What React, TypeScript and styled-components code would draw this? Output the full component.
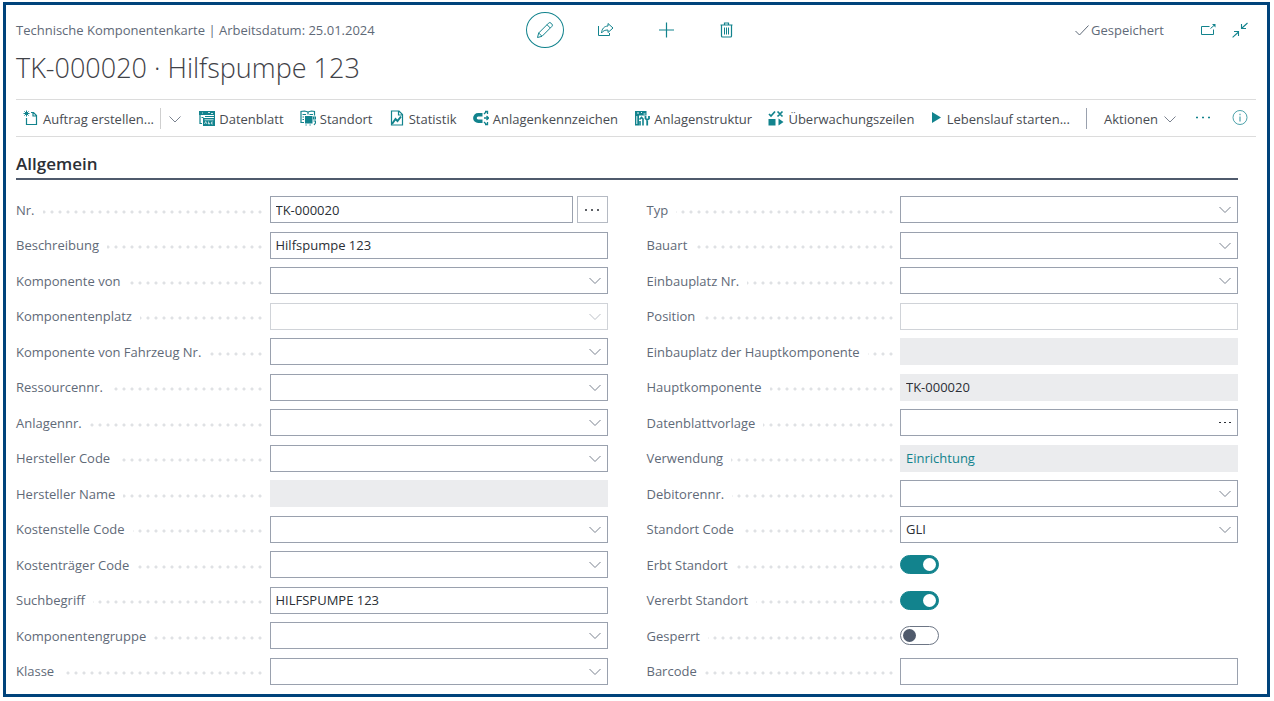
import React, { useId, useState } from "react";
import styled, { createGlobalStyle, css } from "styled-components";

const teal = "#12838d";
const slate = "#5f6a78";
const ink = "#2b2f36";
const line = "#9aa1ae";

const GlobalStyle = createGlobalStyle`
  *, *::before, *::after { box-sizing: border-box; }
  body {
    margin: 0;
    background: #fff;
    color: ${ink};
    font-family: "Open Sans", "Segoe UI", "Noto Sans", sans-serif;
    font-size: 13px;
    line-height: 18px;
  }
  button, input, select { font: inherit; color: inherit; margin: 0; }
`;

const Frame = styled.div`
  display: flex;
  flex-direction: column;
  min-height: calc(100vh - 6px);
  margin: 2px 4px 4px 3px;
  padding: 7px 11px 5px 10px;
  border: 3px solid #00437b;
`;

const Header = styled.header`
  display: grid;
  grid-template-columns: 1fr auto 1fr;
  align-items: center;
  color: ${slate};
`;

const Actions = styled.div`
  display: flex;
  gap: 23px;
`;

const RoundButton = styled.button<{ $active?: boolean }>`
  display: grid;
  place-items: center;
  width: 38px;
  height: 36px;
  padding: 0;
  background: none;
  border: 1px solid ${(p) => (p.$active ? teal : "transparent")};
  border-radius: 50%;
  color: ${teal};
`;

const Status = styled.div`
  display: flex;
  align-items: center;
  justify-content: flex-end;
`;

const Saved = styled.span`
  display: flex;
  align-items: center;
  gap: 1px;
  margin-right: 36px;
`;

const PlainButton = styled.button`
  display: flex;
  align-items: center;
  gap: 4px;
  padding: 0;
  background: none;
  border: 0;
  white-space: nowrap;
`;

const WindowButtons = styled.div`
  display: flex;
  gap: 16px;
  margin-right: 8px;
  color: ${teal};
`;

const Title = styled.h1`
  margin: 0;
  padding: 2px 0 13px;
  color: #3f4248;
  font-size: 27px;
  line-height: 36px;
  font-weight: 300;
`;

const Toolbar = styled.div`
  display: flex;
  align-items: center;
  height: 38px;
  padding: 0 8px 0 7px;
  border-top: 1px solid #dcdcdc;
  border-bottom: 1px solid #dcdcdc;
  color: #484c52;
`;

const ToolGroup = styled.div`
  display: flex;
  flex: 1;
  align-items: center;
  justify-content: space-between;
`;

const SplitTool = styled.div`
  display: flex;
  align-items: center;
  gap: 6px;
`;

const Divider = styled.span<{ $dark?: boolean }>`
  width: 1px;
  height: 21px;
  background: ${(p) => (p.$dark ? line : "#cfcfcf")};
`;

const MenuGroup = styled.div`
  display: flex;
  align-items: center;
  gap: 17px;
  margin-left: 16px;
`;

const ToolText = styled.span`
  padding-top: 1px;
`;

const Section = styled.section`
  display: flex;
  flex: 1;
  flex-direction: column;
  padding-right: 18px;
`;

const SectionTitle = styled.h2`
  margin: 0 0 12px;
  padding: 16px 0 3px;
  border-bottom: 2px solid #4f5a6c;
  font-size: 17px;
  line-height: 22px;
  font-weight: 600;
`;

const Columns = styled.div`
  display: grid;
  flex: 1;
  grid-template-columns: 1fr 1fr;
  column-gap: 39px;
`;

const Column = styled.div`
  display: grid;
  grid-auto-rows: 1fr;
`;

const Row = styled.div`
  display: grid;
  grid-template-columns: 3fr 4fr;
  align-items: center;
  min-height: 35px;
`;

const Label = styled.label`
  display: block;
  margin-right: 5px;
  color: ${slate};
  white-space: nowrap;
  background: radial-gradient(circle at 4px 11px, #dfe1e4 1px, transparent 2px) 0 0 / 8px 18px;
`;

const LabelText = styled.span`
  display: inline-block;
  padding-right: 8px;
  background: #fff;
`;

const Control = styled.div`
  position: relative;
  display: flex;
  gap: 4px;
`;

const fieldStyle = css<{ $muted?: boolean }>`
  flex: 1;
  min-width: 0;
  width: 100%;
  height: 27px;
  padding: 0 5px;
  background: #fff;
  border: 1px solid ${(p) => (p.$muted ? "#d0d3d8" : line)};
  border-radius: 0;
  opacity: 1;
`;

const TextInput = styled.input`
  ${fieldStyle}
  &:read-only:not(:disabled) {
    background: #ebecee;
    border-color: #ebecee;
  }
`;

const Select = styled.select`
  ${fieldStyle}
  appearance: none;
`;

const Overlay = styled.span<{ $muted?: boolean }>`
  position: absolute;
  top: 6px;
  right: 5px;
  height: 16px;
  color: ${(p) => (p.$muted ? "#bcc0c7" : "#7a828f")};
  pointer-events: none;
`;

const InnerButton = styled.button`
  position: absolute;
  top: 5px;
  right: 5px;
  height: 16px;
  padding: 0;
  background: none;
  border: 0;
`;

const AssistButton = styled.button`
  display: grid;
  place-items: center;
  width: 31px;
  height: 27px;
  padding: 0;
  background: #fff;
  border: 1px solid #b5bac3;
`;

const ReadOnlyBox = styled.div`
  flex: 1;
  height: 27px;
  padding: 4px 6px;
  background: #ebecee;
`;

const Link = styled.a`
  color: ${teal};
  text-decoration: none;
`;

const Switch = styled.input`
  appearance: none;
  width: 39px;
  height: 19px;
  padding: 2px;
  border: 1px solid #6d7685;
  border-radius: 10px;
  background: #fff;
  &::before {
    content: "";
    display: block;
    width: 13px;
    height: 13px;
    border-radius: 50%;
    background: #4f5a6c;
  }
  &:checked {
    background: ${teal};
    border-color: ${teal};
  }
  &:checked::before {
    margin-left: 20px;
    background: #fff;
  }
`;

const Svg = styled.svg`
  display: block;
  flex: none;
  fill: none;
  stroke: currentColor;
`;

const TealSvg = styled(Svg)`
  color: ${teal};
`;

const GreySvg = styled(Svg)`
  color: #7a828f;
`;

const Chevron = () => (
  <Svg width="16" height="16" viewBox="0 0 16 16" aria-hidden="true">
    <path d="M2.500 5 8 10.500 13.500 5" />
  </Svg>
);

const MenuChevron = () => (
  <GreySvg width="16" height="16" viewBox="0 0 16 16" aria-hidden="true">
    <path d="M2.500 6.500 8 12l5.500-5.500" />
  </GreySvg>
);

const Dots = () => (
  <Svg width="16" height="16" viewBox="0 0 16 16" aria-hidden="true">
    <path d="M1 8h2M7 8h2M13 8h2" strokeWidth="1.500" />
  </Svg>
);

const SmallDots = () => (
  <Svg width="16" height="16" viewBox="0 0 16 16" aria-hidden="true">
    <path d="M2 8.500h2M7 8.500h2M12 8.500h2" strokeWidth="1.200" />
  </Svg>
);

const icons: Record<string, React.ReactNode> = {
  order: (
    <>
      <path d="M3.500 8v6.500h10V5.500l-3-3H8M10 2.500V6h3.500" strokeWidth="1.200" />
      <path d="M3.500.5v6M.5 3.500h6M1.400 1.400l4.200 4.200M5.600 1.400 1.400 5.600" strokeWidth="1" />
    </>
  ),
  sheet: (
    <>
      <path d="M0 1h16v4H0z" fill="currentColor" stroke="none" />
      <path d="M1 4v9.500h2M15.500 4v4M2.500 7.500h2M6 6.500h9.500" strokeWidth="1.200" />
      <path d="M4 8h12v8H4z" fill="currentColor" stroke="none" />
      <path d="M3 3h1M9 2.500h2M12 3.500h2M5.500 9.800h9" stroke="#fff" strokeWidth=".8" />
      <path d="M5.500 14l1.200-2.500L8 14M9.500 11.500V14h1.200v-1.200M13.800 12h-1.200v2h1.200" stroke="#fff" strokeWidth=".7" />
    </>
  ),
  location: (
    <>
      <path d="M4 12.500H1V1.500l3.500-.5 3.500 1 3.500-1 3 .5v4" strokeWidth="1.200" />
      <path d="M2.500 4.500H6M2.500 7H4M2.500 9.500H4M8 2v2.500M9.500 4.500H13" strokeWidth="1.200" />
      <path d="M5 6h7.500v7.500H5z" fill="currentColor" stroke="none" />
      <path d="M5.500 15h1.200M9.500 15h1.200M13.500 7h2v2h-2zM13.500 11h2v2L14 15" strokeWidth="1.200" />
    </>
  ),
  chart: (
    <>
      <path d="M2.500 1H10l3.500 3.500V15h-11zM9.500 1v4h4" strokeWidth="1.200" />
      <path d="M3 14l3.500-5 2 2L12 6.500" strokeWidth="2" />
    </>
  ),
  tag: (
    <>
      <path d="M9.500 4.700H5.200a3.300 3.300 0 0 0 0 6.600h4.300" strokeWidth="3.600" />
      <path d="M11 4 13.500 1.500M11 8h4M11 12l2.500 2.500M12 1.500h2.500V4M13.500 6l2 2-2 2M12 14.500h2.500V12" strokeWidth="1.300" />
    </>
  ),
  structure: (
    <>
      <path d="M1 15.500V1h11.500v4.500H5V15.500z" fill="currentColor" stroke="none" />
      <path d="M3 3h2M7 2.500h1M9.500 4h2M2.800 6v8" stroke="#fff" strokeWidth=".9" />
      <path d="M6 15.500V11M9 15.500V9M5.500 9.500l2-2 2 2" strokeWidth="1.600" />
      <path d="M11.500 6v2.500l1.500 1.500 2-1.500V6M13.200 9.500v6" strokeWidth="1.800" />
    </>
  ),
  monitor: (
    <>
      <path d="M1 4l2 2 4-4.500M9.500 1.500l5 5M14.500 1.500l-5 5" strokeWidth="1.700" />
      <path d="M.5 9h7v6.500h-7zM10.500 8.500l5 3.500-5 3.500z" fill="currentColor" stroke="none" />
    </>
  ),
};

const ToolIcon = ({ name }: { name: string }) => (
  <TealSvg width="16" height="16" viewBox="0 0 16 16" aria-hidden="true">
    {icons[name]}
  </TealSvg>
);

const Tool = ({ icon, text }: { icon: string; text: string }) => (
  <PlainButton type="button">
    <ToolIcon name={icon} />
    <ToolText>{text}</ToolText>
  </PlainButton>
);

type FieldKind = "text" | "assist" | "select" | "readonly" | "lookup" | "link" | "switch";
interface FieldData {
  label: string;
  kind: FieldKind;
  value?: string;
  disabled?: boolean;
  on?: boolean;
}

const left: FieldData[] = [
  { label: "Nr.", kind: "assist", value: "TK-000020" },
  { label: "Beschreibung", kind: "text", value: "Hilfspumpe 123" },
  { label: "Komponente von", kind: "select" },
  { label: "Komponentenplatz", kind: "select", disabled: true },
  { label: "Komponente von Fahrzeug Nr.", kind: "select" },
  { label: "Ressourcennr.", kind: "select" },
  { label: "Anlagennr.", kind: "select" },
  { label: "Hersteller Code", kind: "select" },
  { label: "Hersteller Name", kind: "readonly" },
  { label: "Kostenstelle Code", kind: "select" },
  { label: "Kostenträger Code", kind: "select" },
  { label: "Suchbegriff", kind: "text", value: "HILFSPUMPE 123" },
  { label: "Komponentengruppe", kind: "select" },
  { label: "Klasse", kind: "select" },
];

const right: FieldData[] = [
  { label: "Typ", kind: "select" },
  { label: "Bauart", kind: "select" },
  { label: "Einbauplatz Nr.", kind: "select" },
  { label: "Position", kind: "text", disabled: true },
  { label: "Einbauplatz der Hauptkomponente", kind: "readonly" },
  { label: "Hauptkomponente", kind: "readonly", value: "TK-000020" },
  { label: "Datenblattvorlage", kind: "lookup" },
  { label: "Verwendung", kind: "link", value: "Einrichtung" },
  { label: "Debitorennr.", kind: "select" },
  { label: "Standort Code", kind: "select", value: "GLI" },
  { label: "Erbt Standort", kind: "switch", on: true },
  { label: "Vererbt Standort", kind: "switch", on: true },
  { label: "Gesperrt", kind: "switch", on: false },
  { label: "Barcode", kind: "text" },
];

function FieldControl({ field, id }: { field: FieldData; id: string }) {
  const [on, setOn] = useState(!!field.on);
  const { kind, value = "", disabled } = field;
  switch (kind) {
    case "select":
      return (
        <>
          <Select id={id} disabled={disabled} $muted={disabled} defaultValue={value}>
            <option>{value}</option>
          </Select>
          <Overlay $muted={disabled}>
            <Chevron />
          </Overlay>
        </>
      );
    case "switch":
      return <Switch id={id} type="checkbox" checked={on} onChange={() => setOn(!on)} />;
    case "link":
      return (
        <ReadOnlyBox>
          <Link id={id} href="#einrichtung">{value}</Link>
        </ReadOnlyBox>
      );
    case "readonly":
      return <TextInput id={id} type="text" readOnly value={value} />;
    default:
      return (
        <>
          <TextInput id={id} type="text" disabled={disabled} $muted={disabled} defaultValue={value} />
          {kind === "assist" && (
            <AssistButton type="button" aria-label="Nummer auswählen">
              <Dots />
            </AssistButton>
          )}
          {kind === "lookup" && (
            <InnerButton type="button" aria-label="Vorlage auswählen">
              <SmallDots />
            </InnerButton>
          )}
        </>
      );
  }
}

function Field({ field }: { field: FieldData }) {
  const id = useId();
  return (
    <Row>
      <Label htmlFor={id}>
        <LabelText>{field.label}</LabelText>
      </Label>
      <Control>
        <FieldControl field={field} id={id} />
      </Control>
    </Row>
  );
}

export default function App() {
  return (
    <>
      <GlobalStyle />
      <Frame>
        <Header>
          <span>Technische Komponentenkarte | Arbeitsdatum: 25.01.2024</span>
          <Actions>
            <RoundButton type="button" $active aria-label="Bearbeiten">
              <Svg width="18" height="18" viewBox="0 0 18 18">
                <path d="M1.500 16.500l1.200-4.500L12.500 2.200a1.800 1.800 0 0 1 2.600 0l.7.7a1.800 1.800 0 0 1 0 2.600L6 15.300zM2.700 12 6 15.300M11 3.700l3.300 3.300" />
              </Svg>
            </RoundButton>
            <RoundButton type="button" aria-label="Teilen">
              <Svg width="18" height="18" viewBox="0 0 18 18">
                <path d="M1.500 5v9.500h11V12" />
                <path d="M11 2.500l5 4.500-5 4.500V9C8 9 6 9.800 4.500 12 4.800 8 7 5.200 11 5z" />
              </Svg>
            </RoundButton>
            <RoundButton type="button" aria-label="Neu">
              <Svg width="18" height="18" viewBox="0 0 18 18">
                <path d="M8.500 1.500v15M1 9h15" strokeWidth="1.200" />
              </Svg>
            </RoundButton>
            <RoundButton type="button" aria-label="Löschen">
              <Svg width="18" height="18" viewBox="0 0 18 18">
                <path d="M1.500 4h12M5.500 4V2h4v2M2.500 4v11a1 1 0 0 0 1 1h8a1 1 0 0 0 1-1V4" strokeWidth="1.200" />
                <path d="M5.500 6.500v7M7.500 6.500v7M9.500 6.500v7" />
              </Svg>
            </RoundButton>
          </Actions>
          <Status>
            <Saved>
              <Svg width="16" height="16" viewBox="0 0 16 16" aria-hidden="true">
                <path d="M1.500 9l4 4L14.500 3.500" />
              </Svg>
              Gespeichert
            </Saved>
            <WindowButtons>
              <PlainButton type="button" aria-label="In neuem Fenster öffnen">
                <TealSvg width="16" height="16" viewBox="0 0 16 16">
                  <path d="M9.500 4.500h-8v8h12V7.500M10.500 6.500l3.500-3" />
                  <path d="M12 2h3.500v3.500z" fill="currentColor" stroke="none" />
                </TealSvg>
              </PlainButton>
              <PlainButton type="button" aria-label="Verkleinern">
                <TealSvg width="16" height="16" viewBox="0 0 16 16">
                  <path d="M15.500 1 10 6M9.500 2v4.500H14M.6 15.400 6.500 10M2 9.500h4.500V14" strokeWidth="1.100" />
                </TealSvg>
              </PlainButton>
            </WindowButtons>
          </Status>
        </Header>
        <Title>TK-000020 · Hilfspumpe 123</Title>
        <Toolbar>
          <ToolGroup>
            <SplitTool>
              <Tool icon="order" text="Auftrag erstellen..." />
              <Divider />
              <PlainButton type="button" aria-label="Weitere Aufträge">
                <MenuChevron />
              </PlainButton>
            </SplitTool>
            <Tool icon="sheet" text="Datenblatt" />
            <Tool icon="location" text="Standort" />
            <Tool icon="chart" text="Statistik" />
            <Tool icon="tag" text="Anlagenkennzeichen" />
            <Tool icon="structure" text="Anlagenstruktur" />
            <Tool icon="monitor" text="Überwachungszeilen" />
            <PlainButton type="button">
              <TealSvg width="12" height="16" viewBox="0 0 12 16" aria-hidden="true">
                <path d="M1 2l9 5.500L1 13z" fill="currentColor" stroke="none" />
              </TealSvg>
              <ToolText>Lebenslauf starten...</ToolText>
            </PlainButton>
          </ToolGroup>
          <MenuGroup>
            <Divider $dark />
            <PlainButton type="button">
              <ToolText>Aktionen</ToolText>
              <MenuChevron />
            </PlainButton>
            <PlainButton type="button" aria-label="Weitere Optionen">
              <TealSvg width="20" height="16" viewBox="0 0 20 16">
                <path d="M1 7.500h2M7 7.500h2M13 7.500h2" strokeWidth="1.500" />
              </TealSvg>
            </PlainButton>
            <PlainButton type="button" aria-label="Information">
              <TealSvg width="16" height="16" viewBox="0 0 16 16">
                <circle cx="8" cy="7.500" r="7" opacity=".75" />
                <path d="M8 6.500v5M8 3.800v1.400" strokeWidth="1.200" opacity=".75" />
              </TealSvg>
            </PlainButton>
          </MenuGroup>
        </Toolbar>
        <Section>
          <SectionTitle>Allgemein</SectionTitle>
          <Columns>
            <Column>
              {left.map((f) => (
                <Field key={f.label} field={f} />
              ))}
            </Column>
            <Column>
              {right.map((f) => (
                <Field key={f.label} field={f} />
              ))}
            </Column>
          </Columns>
        </Section>
      </Frame>
    </>
  );
}
